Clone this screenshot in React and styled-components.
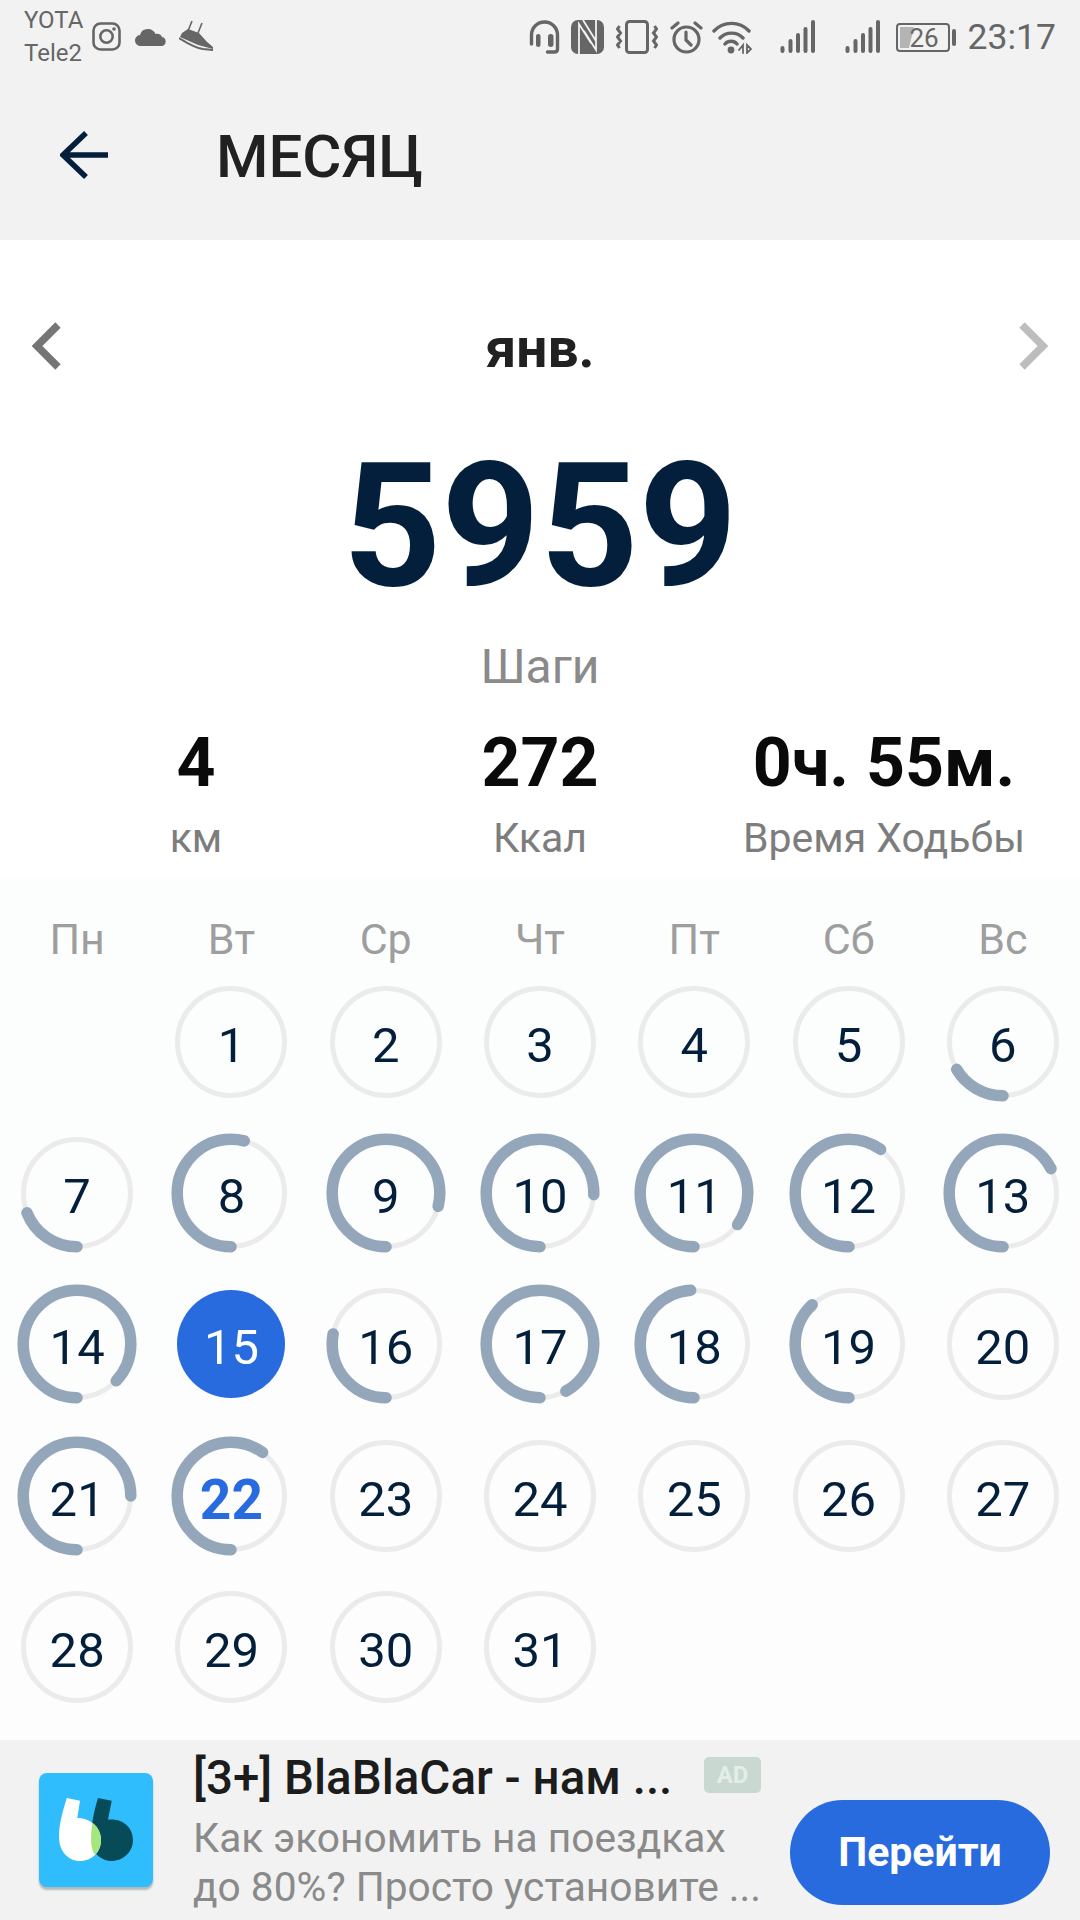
import React from 'react'
import styled, { createGlobalStyle } from 'styled-components'

const GlobalStyle = createGlobalStyle`
    html, body {
        margin: 0;
        padding: 0;
        background: #f2f2f2;
    }
    body {
        font-family: Roboto, "Noto Sans", sans-serif;
    }
`

const colors = {
    bar: '#f2f2f2',
    icon: '#666666',
    navy: '#041f3b',
    ring: '#94a6ba',
    track: '#ebebeb',
    blue: '#276bdf',
    grey: '#8a8a8a'
}

const Page = styled.div`
    width: 1080px;
    height: 1920px;
    overflow: hidden;
    display: flex;
    flex-direction: column;
    background: ${colors.bar};
`, StatusBar = styled.div`
    height: 70px;
    display: flex;
    align-items: center;
    padding: 3px 24px 0 24px;
    box-sizing: border-box;
    color: ${colors.icon};
`, Carriers = styled.div`
    width: 68px;
    font-size: 24px;
    line-height: 33px;
`, Spacer = styled.div`
    flex: 1;
`, StatusIcon = styled.svg`
    display: block;
    flex: none;
    margin-left: ${props => props.gap || 0}px;
    fill: none;
    stroke: ${colors.icon};
`, Time = styled.div`
    font-size: 35.5px;
    line-height: 40px;
    margin-top: 1px;
    margin-left: 12px;
`, AppBar = styled.div`
    height: 170px;
    display: flex;
    align-items: center;
    padding-left: 60px;
`, Title = styled.div`
    margin-left: 108px;
    padding-top: 4px;
    font-size: 60px;
    font-weight: 500;
    color: #212121;
    line-height: 70px;
`, Main = styled.div`
    height: 1500px;
    display: flex;
    flex-direction: column;
    background: linear-gradient(#ffffff 637px, #fcfdfd 640px, #fdfdfd 100%);
`, MonthRow = styled.div`
    height: 60px;
    margin-top: 76px;
    padding: 0 30px;
    display: flex;
    align-items: center;
    justify-content: space-between;
`, Month = styled.div`
    padding-top: 4px;
    font-size: 55px;
    font-weight: 700;
    color: #212121;
    line-height: 60px;
`, Steps = styled.div`
    margin-top: 55px;
    font-size: 172px;
    font-weight: 700;
    line-height: 190px;
    color: ${colors.navy};
    text-align: center;
`, StepsLabel = styled.div`
    margin-top: 21px;
    font-size: 48px;
    line-height: 50px;
    color: ${colors.grey};
    text-align: center;
`, Stats = styled.div`
    margin-top: 33px;
    padding: 0 24px;
    display: grid;
    grid-template-columns: repeat(3, 344px);
`, Stat = styled.div`
    text-align: center;
`, StatValue = styled.div`
    font-size: 68px;
    font-weight: 700;
    line-height: 76px;
    color: #0a0a0a;
`, StatLabel = styled.div`
    font-size: 41px;
    line-height: 46px;
    margin-top: 14px;
    color: #7d7d7d;
`, WeekRow = styled.div`
    margin-top: 53px;
    display: grid;
    grid-template-columns: repeat(7, 1fr);
`, WeekDay = styled.div`
    text-align: center;
    font-size: 43px;
    line-height: 50px;
    color: #9e9e9e;
`, Calendar = styled.div`
    margin-top: 2px;
    display: grid;
    grid-template-columns: repeat(7, 1fr);
    grid-auto-rows: 151.3px;
`, Day = styled.div`
    position: relative;
    grid-column-start: ${props => props.start || 'auto'};
    display: flex;
    align-items: center;
    justify-content: center;
`, RingSvg = styled.svg`
    position: absolute;
    left: 50%;
    top: 50%;
    margin: -60px 0 0 -60px;
`, Today = styled.div`
    position: absolute;
    width: 108px;
    height: 108px;
    border-radius: 50%;
    background: ${colors.blue};
`, DayNum = styled.div`
    position: relative;
    padding-top: 8px;
    font-size: ${props => props.current ? 55 : 49}px;
    line-height: 56px;
    font-weight: ${props => props.current ? 700 : 400};
    color: ${props => props.current ? colors.blue : props.active ? '#ffffff' : colors.navy};
`, Ad = styled.div`
    height: 180px;
    display: flex;
    align-items: center;
    padding: 0 30px 0 39px;
    background: ${colors.bar};
`, AdLogo = styled.div`
    width: 114px;
    height: 114px;
    border-radius: 8px;
    background: #2fbdfd;
    box-shadow: 0 3px 2px rgba(60, 80, 90, 0.35);
    flex: none;
    overflow: hidden;
`, AdText = styled.div`
    width: 597px;
    margin-left: 40px;
    flex: none;
`, AdHead = styled.div`
    display: flex;
    align-items: center;
    height: 62px;
    margin-top: -3px;
`, AdTitle = styled.div`
    width: 511px;
    padding-top: 2px;
    font-size: 47.5px;
    font-weight: 500;
    color: #1c1c1c;
    white-space: nowrap;
`, AdBadge = styled.div`
    width: 57px;
    height: 36px;
    margin-top: -4px;
    border-radius: 5px;
    background: #c9d8d1;
    color: #e3eee9;
    font-size: 24px;
    font-weight: 700;
    line-height: 36px;
    text-align: center;
`, AdDesc = styled.div`
    padding-top: 6px;
    font-size: 40.7px;
    line-height: 48.5px;
    color: ${colors.grey};
    white-space: nowrap;
`, AdButton = styled.div`
    width: 260px;
    height: 105px;
    margin-left: auto;
    margin-top: 44px;
    border-radius: 53px;
    background: ${colors.blue};
    color: #ffffff;
    font-size: 41px;
    font-weight: 700;
    line-height: 105px;
    text-align: center;
`

const Ring = ({ value }) => (
    <RingSvg width="120" height="120" viewBox="0 0 120 120">
        <circle cx="60" cy="60" r="53.5" fill="none" stroke={colors.track} strokeWidth="5" />
        {value > 0 && <circle cx="60" cy="60" r="53.8" fill="none" stroke={colors.ring} strokeWidth="11.5"
            strokeLinecap="round" pathLength="100" strokeDasharray={`${value} 100`}
            transform="rotate(90 60 60)" />}
    </RingSvg>
)

const progress = {
    6: 16.5, 7: 19, 8: 54, 9: 79, 10: 75.5, 11: 85, 12: 60, 13: 67.5, 14: 87,
    16: 28, 17: 92, 18: 49, 19: 38, 21: 75, 22: 60
}
const days = Array.from({ length: 31 }, (_, i) => i + 1)
const weekDays = ['Пн', 'Вт', 'Ср', 'Чт', 'Пт', 'Сб', 'Вс']

const SignalIcon = ({ gap }) => (
    <StatusIcon gap={gap} width="35" height="34" viewBox="0 0 35 34" strokeWidth="4" strokeLinecap="round">
        <path d="M2.500 31v-3M10.500 31V21M18 31V15M25.500 31V9M33 31V2" />
    </StatusIcon>
)

const StatusIcons = () => (
    <>
        <StatusIcon width="31" height="34" viewBox="0 0 31 34" strokeWidth="3.4">
            <path d="M2.500 24V15a13 13 0 0 1 26 0v14q0 3-3 3h-7" strokeLinecap="round" />
            <rect x="7" y="14" width="4.500" height="13" rx="2.200" fill="#666666" stroke="none" />
            <rect x="19" y="14" width="5.500" height="13" rx="2.700" fill="#666666" stroke="none" />
        </StatusIcon>
        <StatusIcon gap="11" width="33" height="34" viewBox="0 0 33 34">
            <rect width="33" height="34" rx="7" fill="#666666" stroke="none" />
            <path d="M8 34V4l12 19M12 0l13 21M25 0v30L13 11" stroke="#f2f2f2" strokeWidth="1.800" />
        </StatusIcon>
        <StatusIcon gap="12" width="42" height="34" viewBox="0 0 42 34" strokeWidth="3">
            <rect x="10.500" y="1.500" width="21" height="31" rx="3" />
            <path d="M3.500 6l-2 3 3 4-3 4 3 4-3 4 2 3M38.500 6l2 3-3 4 3 4-3 4 3 4-2 3" />
        </StatusIcon>
        <StatusIcon gap="12" width="33" height="34" viewBox="0 0 33 34" strokeWidth="3.200">
            <circle cx="16.500" cy="19.500" r="12.500" />
            <path d="M16 12v8l5 5M2 8l6-5M31 8l-6-5" strokeLinecap="round" />
        </StatusIcon>
        <StatusIcon gap="9" width="40" height="34" viewBox="0 0 40 34" strokeWidth="3.400" strokeLinecap="round">
            <path d="M2 11a24 24 0 0 1 35 0M8 18a16 16 0 0 1 23 0M13 24a8 8 0 0 1 12 0" />
            <circle cx="19" cy="30" r="3.400" fill="#666666" stroke="none" />
            <path d="M27 30l4-5v8M35 25v8l4-4z" strokeWidth="1.800" />
        </StatusIcon>
        <SignalIcon gap="28" />
        <SignalIcon gap="30" />
        <StatusIcon gap="16" width="60" height="30" viewBox="0 0 60 30">
            <rect x="1" y="2" width="52" height="27" rx="3" strokeWidth="2" />
            <path d="M4 5h14l-5 21H4z" fill="#b4b4b4" stroke="none" />
            <rect x="56" y="7" width="4" height="17" rx="2" fill="#666666" stroke="none" />
            <text x="28" y="25" textAnchor="middle" fontSize="26" fill="#666666" stroke="none" fontFamily="Roboto">26</text>
        </StatusIcon>
    </>
)

const App = () => (
    <Page>
        <GlobalStyle />
        <StatusBar>
            <Carriers>YOTA<br />Tele2</Carriers>
            <StatusIcon width="29" height="29" viewBox="0 0 29 29" strokeWidth="2.600">
                <rect x="1.500" y="1.500" width="26" height="26" rx="7" />
                <circle cx="14.500" cy="14.500" r="6.200" />
                <circle cx="22" cy="7" r="1.800" fill="#666666" stroke="none" />
            </StatusIcon>
            <StatusIcon gap="14" width="33" height="20" viewBox="0 0 33 20">
                <path d="M6 19a5.500 5.500 0 0 1-1-11 8 8 0 0 1 8-6c3.500 0 6.500 2 7.500 5 1-.5 3-.5 4.500.5 1 .8 1.500 1.500 2 2.500a4.600 4.600 0 0 1 0 9z" fill="#666666" stroke="none" />
            </StatusIcon>
            <StatusIcon gap="11" width="35" height="33" viewBox="0 0 35 33">
                <path d="M13 1L9 11M23 3l-4 10" stroke="#666666" strokeWidth="1.600" />
                <path d="M3 13l6-4 11 4 8 9 6 5v2l-15-4L1 17z" fill="#666666" stroke="none" />
                <path d="M0 18c8 5 16 10 24 11l10 1" stroke="#666666" strokeWidth="2" />
            </StatusIcon>
            <Spacer />
            <StatusIcons />
            <Time>23:17</Time>
        </StatusBar>
        <AppBar>
            <svg width="48" height="48" viewBox="0 0 48 48" fill="none" stroke={colors.navy} strokeWidth="5.500">
                <path d="M26 2L3 24l23 22M3 24h45" />
            </svg>
            <Title>МЕСЯЦ</Title>
        </AppBar>
        <Main>
            <MonthRow>
                <svg width="34" height="48" viewBox="0 0 34 48" fill="none" stroke="#757575" strokeWidth="7.500">
                    <path d="M28 3L7 24l21 21" />
                </svg>
                <Month>янв.</Month>
                <svg width="34" height="48" viewBox="0 0 34 48" fill="none" stroke="#bdbdbd" strokeWidth="7.500">
                    <path d="M6 3l21 21L6 45" />
                </svg>
            </MonthRow>
            <Steps>5959</Steps>
            <StepsLabel>Шаги</StepsLabel>
            <Stats>
                <Stat>
                    <StatValue>4</StatValue>
                    <StatLabel>км</StatLabel>
                </Stat>
                <Stat>
                    <StatValue>272</StatValue>
                    <StatLabel>Ккал</StatLabel>
                </Stat>
                <Stat>
                    <StatValue>0ч. 55м.</StatValue>
                    <StatLabel>Время Ходьбы</StatLabel>
                </Stat>
            </Stats>
            <WeekRow>
                {weekDays.map(d => <WeekDay key={d}>{d}</WeekDay>)}
            </WeekRow>
            <Calendar>
                {days.map(d => (
                    <Day key={d} start={d === 1 ? 2 : null}>
                        {d === 15 ? <Today /> : <Ring value={progress[d] || 0} />}
                        <DayNum active={d === 15} current={d === 22}>{d}</DayNum>
                    </Day>
                ))}
            </Calendar>
        </Main>
        <Ad>
            <AdLogo>
                <svg width="114" height="114" viewBox="0 0 114 114">
                    <path d="M59 25L72.700 27.700 69 46.700C83 45 94 54 94 67 94 79 84 88 72.700 88 61 88 52 78 52 67 52 52 55 38 59 25Z" fill="#064b57" />
                    <path d="M27.700 25L41 27.700 38.300 45C52 45 62 55 62 67 62 79 53 88 41 88 29 88 20 78 20 64 20 50 24 38 27.700 25Z" fill="#ffffff" />
                    <path d="M53.500 50C59 54 62 60 62 67 62 73 60 78 56 82 53 78 52 72 52 67 52 61 52.500 55 53.500 50Z" fill="#a6e67f" />
                </svg>
            </AdLogo>
            <AdText>
                <AdHead>
                    <AdTitle>[3+] BlaBlaCar - нам ...</AdTitle>
                    <AdBadge>AD</AdBadge>
                </AdHead>
                <AdDesc>Как экономить на поездках<br />до 80%? Просто установите ...</AdDesc>
            </AdText>
            <AdButton>Перейти</AdButton>
        </Ad>
    </Page>
)

export default App
